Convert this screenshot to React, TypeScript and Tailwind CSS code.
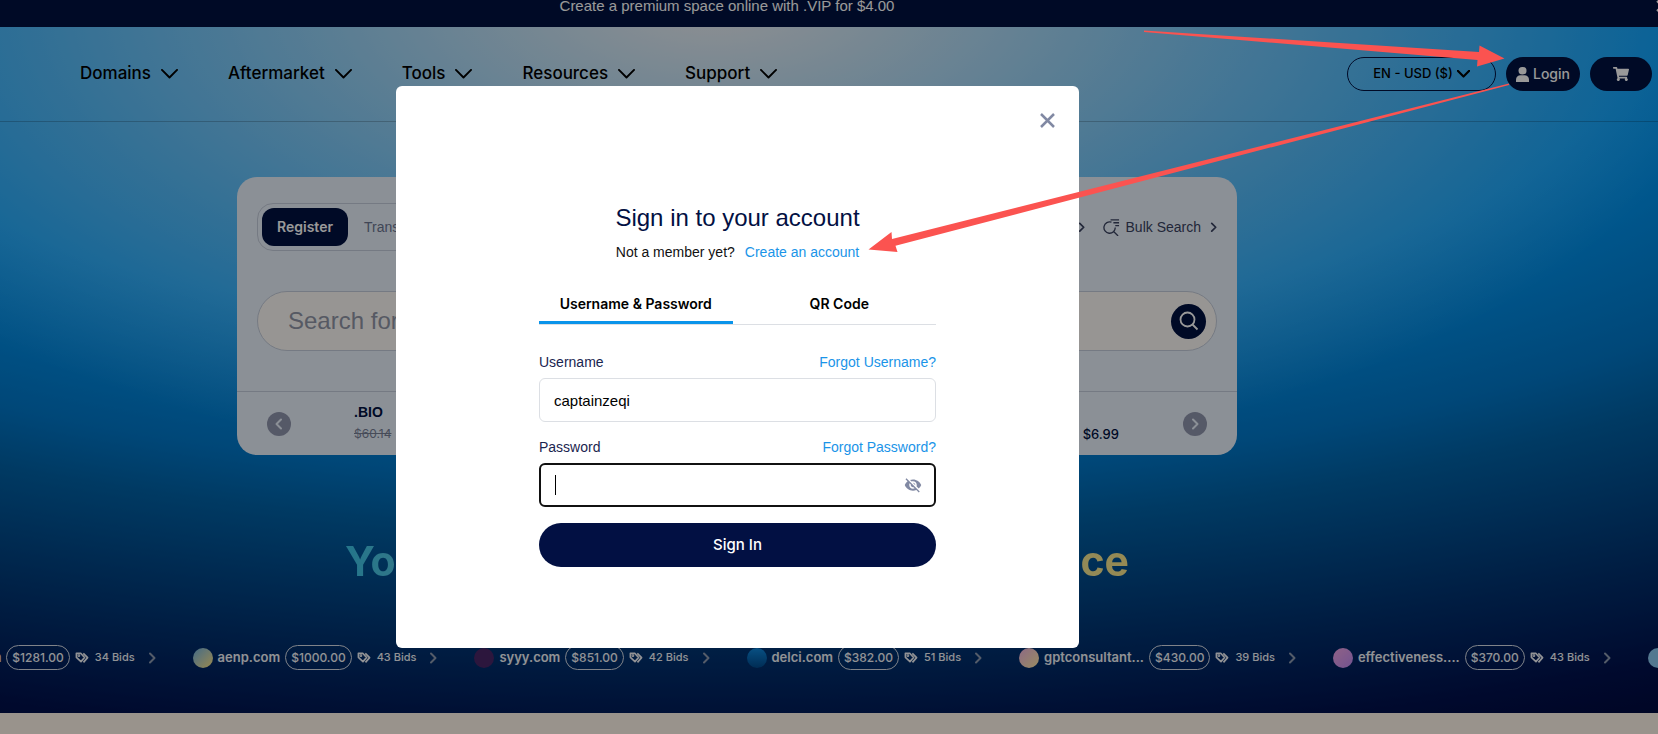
import { useState } from 'react';
import { FaShoppingCart } from 'react-icons/fa';
import { MdVisibilityOff } from 'react-icons/md';

const NAV_ITEMS = ['Domains', 'Aftermarket', 'Tools', 'Resources', 'Support'];

const AUCTIONS = [
  { name: 'goldenpalm.com', price: '$1281.00', bids: 34, color: 'bg-[#7fb7d6]' },
  { name: 'aenp.com', price: '$1000.00', bids: 43, color: 'bg-linear-135 from-[#6fb0dc] to-[#ffe37a]' },
  { name: 'syyy.com', price: '$851.00', bids: 42, color: 'bg-[#4a2566]' },
  { name: 'delci.com', price: '$382.00', bids: 51, color: 'bg-linear-to-b from-[#0f87dc] to-[#024a8c]' },
  { name: 'gptconsultant...', price: '$430.00', bids: 39, color: 'bg-linear-135 from-[#ecb0dc] to-[#ffe9a0]' },
  { name: 'effectiveness....', price: '$370.00', bids: 43, color: 'bg-linear-135 from-[#f0a3e0] to-[#c08bf0]' },
  { name: 'nextdomain.com', price: '$365.00', bids: 28, color: 'bg-[#8cc8f0]' },
];

type ChevronProps = { className?: string; strokeWidth?: number };

function ChevronDown({ className, strokeWidth = 2 }: ChevronProps) {
  return (
    <svg viewBox="0 0 18 10" fill="none" stroke="currentColor" strokeWidth={strokeWidth} className={className}>
      <path d="M1 1l8 8 8-8" strokeLinecap="round" strokeLinejoin="round" />
    </svg>
  );
}

function ChevronRight({ className, strokeWidth = 2 }: ChevronProps) {
  return (
    <svg viewBox="0 0 8 12" fill="none" stroke="currentColor" strokeWidth={strokeWidth} className={className}>
      <path d="M2 1.5L6.5 6 2 10.5" strokeLinecap="round" strokeLinejoin="round" />
    </svg>
  );
}

function TagsIcon() {
  return (
    <svg viewBox="0 0 16 14" className="h-3 w-[14px] shrink-0" fill="none" stroke="currentColor" strokeWidth="2" strokeLinejoin="round">
      <path d="M1.5 1.5h5L11 6.4 6.8 11.2 1.5 6.2z" />
      <path d="M9.5 1.5l5 5-4.8 5.6" />
      <circle cx="4.4" cy="4.3" r="0.6" />
    </svg>
  );
}

function TopBanner() {
  return (
    <div className="flex h-[27px] items-start bg-[#001140] text-white">
      <p className="flex-1 pr-[202px] text-center text-[15px] leading-3">Create a premium space online with .VIP for $4.00</p>
      <button aria-label="Dismiss" className="-mr-3 h-3 w-[14px]">
        <svg viewBox="0 0 12 12" className="h-3 w-3" stroke="currentColor" strokeWidth="2">
          <path d="M1 1l10 10M11 1L1 11" />
        </svg>
      </button>
    </div>
  );
}

function Header() {
  return (
    <header className="flex h-[95px] items-center justify-between border-b border-black/20 pr-[6px] pl-20">
      <nav className="flex gap-[50px]">
        {NAV_ITEMS.map((item) => (
          <button key={item} className="flex items-center gap-[10px] font-[Inter] text-[17px] font-medium">
            {item}
            <ChevronDown className="w-[17px]" />
          </button>
        ))}
      </nav>
      <div className="flex gap-[10px] font-[Inter] font-medium">
        <button className="flex h-[34px] w-[149px] items-center justify-center gap-1 rounded-full border border-[#001140] text-[13px]">
          EN - USD ($)
          <ChevronDown className="w-[13px]" strokeWidth={3} />
        </button>
        <button className="flex h-[34px] w-[74px] items-center justify-center gap-1 rounded-full bg-[#001140] text-sm text-white">
          <svg viewBox="0 0 13 15" className="w-[13px]" fill="currentColor">
            <rect x="2.5" width="8" height="7.5" rx="3.7" />
            <path d="M0 15v-2.5C0 10 2 8.3 4.5 8.3h4C11 8.3 13 10 13 12.5V15z" />
          </svg>
          Login
        </button>
        <button aria-label="Cart" className="flex h-[34px] w-[62px] items-center justify-center rounded-full bg-[#001140] text-white">
          <FaShoppingCart size={16} />
        </button>
      </div>
    </header>
  );
}

function SearchCard() {
  return (
    <section className="mx-auto w-full max-w-[1000px] rounded-[20px] bg-[#e8f0fb]">
      <div className="flex items-center justify-between px-5 pt-[26px]">
        <div className="flex h-12 items-center gap-4 rounded-2xl border border-[#c4ccda] px-1 text-sm">
          <button className="h-[38px] w-[86px] rounded-xl bg-[#001140] font-[Inter] font-semibold text-white">Register</button>
          <button className="pr-4 text-[#6b7590]">Transfer</button>
        </div>
        <div className="flex items-center gap-[18px] text-sm text-[#39425f]">
          <a href="#" className="flex items-center gap-[9px]">
            AI Search
            <ChevronRight className="w-[7px]" />
          </a>
          <a href="#" className="flex items-center gap-[6px]">
            <svg viewBox="0 0 18 20" className="w-[17px]" fill="none" stroke="currentColor" strokeWidth="1.4">
              <path d="M9 4.5A6 6 0 1 0 13 10" />
              <path d="M8 2h9M11 5h6M13 8h4M11.5 14.5l4.5 4.5" />
            </svg>
            Bulk Search
            <ChevronRight className="ml-[3px] w-[7px]" />
          </a>
        </div>
      </div>
      <div className="px-5 py-10">
        <div className="flex h-[60px] items-center rounded-full border border-[#c4ccda] bg-[#fcf9f5] pr-[10px] pl-[30px]">
          <input
            aria-label="Search for a domain"
            placeholder="Search for a domain"
            className="min-w-0 flex-1 bg-transparent text-2xl outline-none placeholder:text-[#9095a6]"
          />
          <button aria-label="Search" className="flex size-[35px] items-center justify-center rounded-full bg-[#001140] text-white">
            <svg viewBox="0 0 20 20" className="size-5" fill="none" stroke="currentColor" strokeWidth="1.8">
              <circle cx="8.5" cy="8.5" r="7" />
              <path d="M13.5 13.5l5 5" />
            </svg>
          </button>
        </div>
      </div>
      <div className="flex h-16 items-center border-t border-[#c4ccda] px-[30px]">
        <button aria-label="Previous" className="flex size-6 items-center justify-center rounded-full bg-[#8e94ac] text-[#e8f0fb]">
          <ChevronRight className="w-2 rotate-180" />
        </button>
        <div className="flex flex-1 items-end justify-between pr-16 pl-[63px] text-[#001140]">
          <div>
            <p className="text-sm leading-5 font-bold">.BIO</p>
            <p className="font-[Inter] text-xs leading-6 text-[#777f95] line-through">$60.14</p>
          </div>
          <p className="font-[Inter] text-[13px] leading-6 font-medium">$6.99</p>
        </div>
        <button aria-label="Next" className="flex size-6 items-center justify-center rounded-full bg-[#8e94ac] text-[#e8f0fb]">
          <ChevronRight className="w-2" />
        </button>
      </div>
    </section>
  );
}

function AuctionTicker() {
  return (
    <ul className="-ml-[129px] flex items-center gap-[37px] font-[Inter] font-medium text-[#f2f4f8]">
      {AUCTIONS.map((auction) => (
        <li key={auction.name} className="flex shrink-0 items-center gap-[5px]">
          <span className={`size-5 rounded-full ${auction.color}`} />
          <a href="#" className="text-[13px] font-semibold">{auction.name}</a>
          <span className="flex h-[25px] items-center rounded-full border border-[#d5dae4] px-[5px] text-xs">{auction.price}</span>
          <TagsIcon />
          <span className="pl-px text-[11px]">{auction.bids} Bids</span>
          <ChevronRight className="ml-2 w-2 text-[#8d9ab0]" />
        </li>
      ))}
    </ul>
  );
}

function SignInModal() {
  const [username, setUsername] = useState('captainzeqi');
  const [password, setPassword] = useState('');
  const [showPassword, setShowPassword] = useState(false);

  return (
    <div role="dialog" aria-labelledby="signin-title" className="relative w-[683px] rounded-md bg-white pt-[116px] pb-[81px]">
      <button aria-label="Close" className="absolute top-[27px] right-6 text-[#8189a3]">
        <svg viewBox="0 0 15 15" className="size-[15px]" stroke="currentColor" strokeWidth="2.5">
          <path d="M1 1l13 13M14 1L1 14" />
        </svg>
      </button>

      <form className="mx-auto flex w-[397px] flex-col" onSubmit={(e) => e.preventDefault()}>
        <h1 id="signin-title" className="text-center text-2xl text-[#021043]">Sign in to your account</h1>
        <p className="flex justify-center gap-[10px] pt-2 text-sm text-[#111]">
          Not a member yet?
          <a href="#" className="text-[#1a94e8]">Create an account</a>
        </p>

        <div className="mt-6 flex gap-[10px] border-b border-[#dcdfe4] font-[Inter] text-sm font-semibold">
          <button type="button" className="h-[38px] flex-1 border-b-3 border-[#0a94ea]">Username &amp; Password</button>
          <button type="button" className="h-[38px] flex-1 border-b-3 border-transparent">QR Code</button>
        </div>

        <div className="flex justify-between pt-[27px] text-sm text-[#1a2550]">
          <label htmlFor="username">Username</label>
          <a href="#" className="text-[#1a94e8]">Forgot Username?</a>
        </div>
        <input
          id="username"
          value={username}
          onChange={(e) => setUsername(e.target.value)}
          className="mt-[6px] h-11 rounded-md border border-[#dcdfe4] px-[14px] text-[15px] outline-none"
        />

        <div className="flex justify-between pt-[15px] text-sm text-[#1a2550]">
          <label htmlFor="password">Password</label>
          <a href="#" className="text-[#1a94e8]">Forgot Password?</a>
        </div>
        <div className="relative mt-[6px] flex h-11 items-center rounded-md border-2 border-[#111] pr-3 pl-[14px]">
          {/* text cursor */}
          {password === '' && <span className="absolute left-[14px] h-5 w-px bg-black" />}
          <input
            id="password"
            type={showPassword ? 'text' : 'password'}
            value={password}
            onChange={(e) => setPassword(e.target.value)}
            className="min-w-0 flex-1 text-[15px] outline-none"
          />
          <button type="button" aria-label="Show password" onClick={() => setShowPassword(!showPassword)} className="text-[#8189a3]">
            <MdVisibilityOff size={18} />
          </button>
        </div>

        <button className="mt-4 h-11 rounded-full bg-[#021043] font-[Inter] text-[15px] font-medium text-white">Sign In</button>
      </form>
    </div>
  );
}

export default function App() {
  return (
    <div className="relative flex min-h-screen flex-col overflow-hidden bg-[#fff6e9] font-['Liberation_Sans',Arial,sans-serif]">
      <TopBanner />
      <main className="bg-[radial-gradient(ellipse_62%_70%_at_43%_-4%,#f0f0f2_0%,#f0f0f2d1_18%,#f0f0f291_43%,#f0f0f247_73%,#f0f0f200_100%),radial-gradient(ellipse_124%_108%_at_43%_-4%,#009efd_46%,#0077c8_65%,#0061a5_72%,#004484_82%,#00306e_89%,#00205d_95%,#00104c_101%,#00083c_108%)]">
        <Header />
        <div className="pt-[55px] pr-[184px]">
          <SearchCard />
          <h2 className="mx-auto mt-[76px] w-fit bg-linear-to-r from-[#3cc4e8] to-[#fbe68b] bg-clip-text font-[Inter] text-[41px] leading-[60px] font-bold text-transparent">
            Your Full Service Premium Marketplace
          </h2>
        </div>
        <div className="pt-[54px] pb-[43px]">
          <AuctionTicker />
        </div>
      </main>

      <div className="absolute inset-0 flex items-start justify-center bg-black/40 pt-[86px] pr-[183px]">
        <SignInModal />
      </div>

      {/* pointer arrows */}
      <svg width="1658" height="734" viewBox="0 0 1658 734" fill="#fb5350" className="pointer-events-none absolute top-0 left-0 max-w-none">
        <path d="M1144 30.5L1479 52l.5-6.5L1504.5 58.5 1477 66.5l.5-6.5L1144 32z" />
        <path d="M1509 83.5L892 239l-.5-7L868.5 249.5l29 2.5-2-6.2L1509 85z" />
      </svg>
    </div>
  );
}
